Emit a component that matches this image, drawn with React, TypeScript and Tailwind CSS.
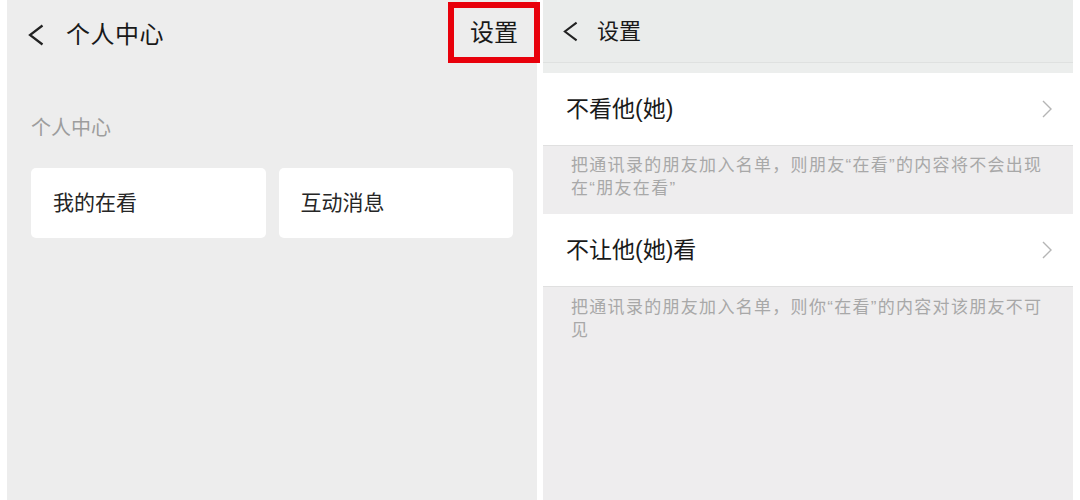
const font = { fontFamily: '"Liberation Sans", "Noto Sans CJK SC", sans-serif' };

function BackArrow({ className }: { className?: string }) {
  return (
    <svg viewBox="0 0 16 22" className={className} fill="none" stroke="currentColor" strokeWidth={2.2}>
      <polyline points="14.5,1.5 2,11 14.5,20.5" strokeLinejoin="miter" />
    </svg>
  );
}

function Chevron() {
  return (
    <svg viewBox="0 0 10 18" className="h-[18px] w-[10px] text-[#b5b5b5]" fill="none" stroke="currentColor" strokeWidth={1.4}>
      <polyline points="1,1 9,9 1,17" />
    </svg>
  );
}

function ProfilePanel() {
  return (
    <div className="relative h-full w-[530px] shrink-0 bg-[#ededed]">
      {/* header */}
      <div className="flex h-[69px] items-center pl-[21px]">
        <BackArrow className="h-[22px] w-[16px] text-[#222]" />
        <span className="ml-[22px] text-[24px] tracking-[0.5px] text-[#191919]">个人中心</span>
      </div>
      {/* highlighted settings button */}
      <div className="absolute left-[441px] top-[2px] flex h-[61px] w-[92px] items-center justify-center border-[6px] border-[#e8000b]">
        <span className="text-[24px] text-[#191919]">设置</span>
      </div>

      <div className="px-[24px] pt-[46px]">
        <p className="text-[20px] leading-[26px] text-[#9d9d9d]">个人中心</p>
        <div className="mt-[27px] grid grid-cols-2 gap-[13px]">
          <div className="flex h-[70px] items-center rounded-[5px] bg-white pl-[22px] text-[21px] text-[#262626]">我的在看</div>
          <div className="flex h-[70px] items-center rounded-[5px] bg-white pl-[22px] text-[21px] text-[#262626]">互动消息</div>
        </div>
      </div>
    </div>
  );
}

function SettingRow({ title, desc, pt }: { title: string; desc: string; pt: string }) {
  return (
    <>
      <div className="flex h-[72px] items-center justify-between bg-white pl-[23px] pr-[21px]">
        <span className="text-[23px] text-[#1a1a1a]">{title}</span>
        <Chevron />
      </div>
      <div className={`border-t border-[#e0e0e0] pb-[14px] pl-[28px] pr-[22px] text-[17px] leading-[23px] tracking-[1.3px] text-[#a8a8a8] ${pt}`}>
        {desc}
      </div>
    </>
  );
}

function SettingsPanel() {
  return (
    <div className="h-full w-[530px] shrink-0 bg-[#eeedee]">
      <div className="flex h-[62px] items-center bg-[#eaeceb] pl-[20px]">
        <BackArrow className="h-[21px] w-[15px] text-[#222]" />
        <span className="ml-[19px] text-[22px] text-[#191919]">设置</span>
      </div>
      <div className="h-[11px] border-t border-[#dfe1e0] bg-[#eceeed]" />
      <SettingRow
        title="不看他(她)"
        desc="把通讯录的朋友加入名单，则朋友“在看”的内容将不会出现在“朋友在看”"
        pt="pt-[8px]"
      />
      <SettingRow
        title="不让他(她)看"
        desc="把通讯录的朋友加入名单，则你“在看”的内容对该朋友不可见"
        pt="pt-[9px]"
      />
    </div>
  );
}

export default function App() {
  return (
    <div className="flex h-[500px] w-[1080px] gap-[6px] overflow-hidden bg-white px-[7px]" style={font}>
      <ProfilePanel />
      <SettingsPanel />
    </div>
  );
}
